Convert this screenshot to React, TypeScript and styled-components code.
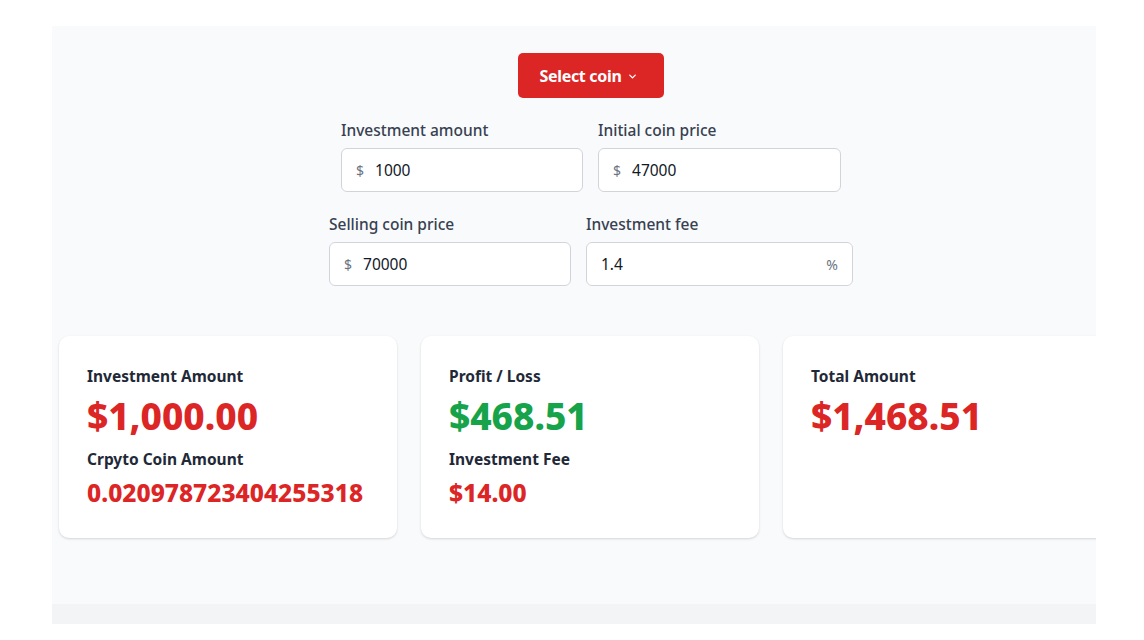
import React from "react";
import styled, { createGlobalStyle } from "styled-components";

const GlobalStyle = createGlobalStyle`
	body {
		margin: 0;
		background: #ffffff;
		font-family: "Noto Sans", "Open Sans", sans-serif;
	}
`;

type FieldProps = {
	label: string;
	value: string;
	width: number;
	prefix?: string;
	suffix?: string;
};

function Field({ label, value, width, prefix, suffix }: FieldProps) {
	return (
		<FieldBox $width={width}>
			<FieldLabel>{label}</FieldLabel>
			<InputWrap>
				{prefix && <Affix>{prefix}</Affix>}
				<Input defaultValue={value} />
				{suffix && <Affix>{suffix}</Affix>}
			</InputWrap>
		</FieldBox>
	);
}

type StatProps = {
	label: string;
	value: string;
	tone: "red" | "green";
	subLabel?: string;
	subValue?: string;
};

function StatCard({ label, value, tone, subLabel, subValue }: StatProps) {
	return (
		<Card>
			<CardLabel>{label}</CardLabel>
			<BigValue $tone={tone}>{value}</BigValue>
			{subLabel && <CardLabel $sub>{subLabel}</CardLabel>}
			{subValue && <SmallValue>{subValue}</SmallValue>}
		</Card>
	);
}

export default function App() {
	return (
		<>
			<GlobalStyle />
			<Page>
				<Panel>
					<Content>
						<SelectButton>
							Select coin
							<svg width="11" height="11" viewBox="0 0 24 24" fill="none" stroke="currentColor" strokeWidth="3" strokeLinecap="round" strokeLinejoin="round">
								<path d="M6 9l6 6 6-6" />
							</svg>
						</SelectButton>
						<Form>
							<FieldRow>
								<Field label="Investment amount" value="1000" prefix="$" width={242} />
								<Field label="Initial coin price" value="47000" prefix="$" width={243} />
							</FieldRow>
							<FieldRow>
								<Field label="Selling coin price" value="70000" prefix="$" width={242} />
								<Field label="Investment fee" value="1.4" suffix="%" width={267} />
							</FieldRow>
						</Form>
						<Cards>
							<StatCard
								label="Investment Amount"
								value="$1,000.00"
								tone="red"
								subLabel="Crpyto Coin Amount"
								subValue="0.020978723404255318"
							/>
							<StatCard
								label="Profit / Loss"
								value="$468.51"
								tone="green"
								subLabel="Investment Fee"
								subValue="$14.00"
							/>
							<StatCard label="Total Amount" value="$1,468.51" tone="red" />
						</Cards>
					</Content>
				</Panel>
				<Strip />
			</Page>
		</>
	);
}

const Page = styled.div`
	padding-top: 26px;
	padding-left: 52px;
	width: 1044px;
`;

const Panel = styled.div`
	height: 578px;
	background: #f9fafb;
	overflow: hidden;
`;

const Strip = styled.div`
	height: 20px;
	background: #f3f4f6;
`;

const Content = styled.div`
	width: 1064px;
	padding-left: 7px;
	padding-top: 27px;
	display: flex;
	flex-direction: column;
	align-items: center;
`;

const SelectButton = styled.button`
	display: flex;
	align-items: center;
	gap: 5px;
	height: 45px;
	padding: 0 26px 0 21px;
	border: none;
	border-radius: 5px;
	background: #dc2626;
	color: #ffffff;
	font-family: inherit;
	font-size: 16px;
	font-weight: 700;
	letter-spacing: -0.3px;
	cursor: pointer;

	svg {
		margin-top: 2px;
	}
`;

const Form = styled.div`
	display: flex;
	flex-direction: column;
	align-items: center;
	gap: 20px;
	margin-top: 20px;
`;

const FieldRow = styled.div`
	display: flex;
	gap: 15px;
`;

const FieldBox = styled.div<{ $width: number }>`
	width: ${(p) => p.$width}px;
	display: flex;
	flex-direction: column;
	gap: 6px;
`;

const FieldLabel = styled.label`
	font-size: 15.5px;
	font-weight: 500;
	line-height: 24px;
	color: #374151;
`;

const InputWrap = styled.div`
	display: flex;
	align-items: center;
	gap: 11px;
	height: 44px;
	box-sizing: border-box;
	padding: 0 14px;
	background: #ffffff;
	border: 1px solid #d1d5db;
	border-radius: 6px;
`;

const Affix = styled.span`
	font-size: 14px;
	color: #6b7280;
`;

const Input = styled.input`
	flex: 1;
	min-width: 0;
	border: none;
	outline: none;
	padding: 0;
	background: transparent;
	font-family: inherit;
	font-size: 15.5px;
	color: #111827;
`;

const Cards = styled.div`
	display: grid;
	grid-template-columns: repeat(3, 338px);
	gap: 24px;
	margin-top: 50px;
	align-self: flex-start;
`;

const Card = styled.div`
	height: 202px;
	box-sizing: border-box;
	padding: 28px 28px 0;
	background: #ffffff;
	border-radius: 10px;
	box-shadow: 0 1px 3px rgba(0, 0, 0, 0.1), 0 1px 2px rgba(0, 0, 0, 0.06);
`;

const CardLabel = styled.div<{ $sub?: boolean }>`
	margin-top: ${(p) => (p.$sub ? "11px" : "0")};
	font-size: 15.5px;
	font-weight: 700;
	line-height: 24px;
	color: #1f2937;
`;

const BigValue = styled.div<{ $tone: "red" | "green" }>`
	margin-top: 8px;
	font-size: 37px;
	font-weight: 800;
	line-height: 40px;
	color: ${(p) => (p.$tone === "green" ? "#16a34a" : "#dc2626")};
`;

const SmallValue = styled.div`
	margin-top: 6px;
	font-size: 24.5px;
	font-weight: 800;
	line-height: 32px;
	color: #dc2626;
`;
